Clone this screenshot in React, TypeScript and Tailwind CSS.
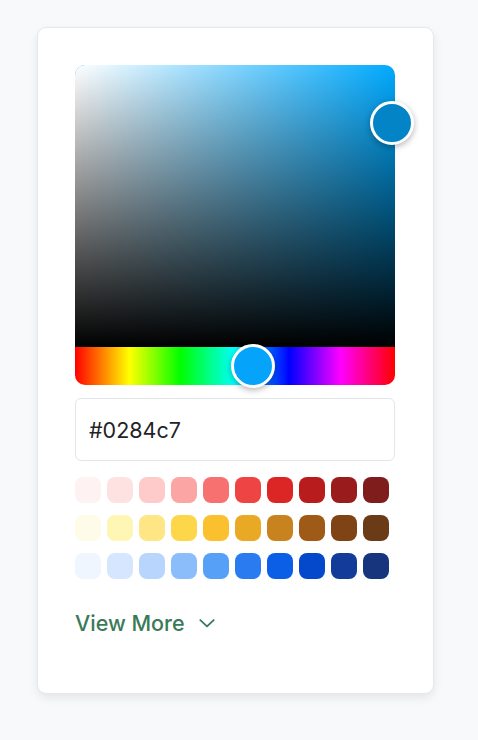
import { useState } from 'react';

const swatches = [
  ['#fef2f2', '#fee2e2', '#fecaca', '#fca5a5', '#f87171', '#ef4444', '#dc2626', '#b91c1c', '#991b1b', '#7f1d1d'],
  ['#fefce8', '#fef6b4', '#fee685', '#fdd649', '#fbc02d', '#eaa925', '#c98220', '#a05a17', '#7e4416', '#6b3a17'],
  ['#eff6ff', '#d6e6fe', '#b7d5fd', '#8bbdfb', '#56a0f7', '#2a7bf0', '#0b5fe6', '#0448cc', '#133c9a', '#17357d'],
];

const App = () => {
  const [hex, setHex] = useState('#0284c7');

  return (
    <div
      className="min-h-screen bg-[#f8f9fb] pl-[37px] pt-[27px]"
      style={{ fontFamily: 'Inter, "Noto Sans", sans-serif' }}
    >
      <div className="w-[397px] h-[667px] bg-white border border-[#e5e7eb] rounded-[9px] shadow-[0_4px_10px_rgba(0,0,0,0.08)] px-[37px] pt-[37px]">
        {/* picker */}
        <div className="relative w-[320px]">
          <div className="relative h-[282px] rounded-t-[10px] bg-[#00aaff] overflow-hidden">
            <div className="absolute inset-0 bg-gradient-to-r from-white to-transparent" />
            <div className="absolute inset-0 bg-gradient-to-b from-transparent to-black" />
          </div>
          <div className="h-[38px] rounded-b-[10px] bg-[linear-gradient(to_right,#ff0000_0%,#ffff00_17%,#00ff00_33%,#00ffff_50%,#0000ff_67%,#ff00ff_83%,#ff0000_100%)]" />
          <div className="absolute left-[295px] top-[36px] w-[44px] h-[44px] rounded-full border-[3px] border-white bg-[#0284c7] shadow-[0_2px_6px_rgba(0,0,0,0.3)]" />
          <div className="absolute left-[156px] top-[279px] w-[44px] h-[44px] rounded-full border-[3px] border-white bg-[#06a3fb] shadow-[0_2px_6px_rgba(0,0,0,0.3)]" />
        </div>

        <input
          value={hex}
          onChange={(e) => setHex(e.target.value)}
          className="mt-[13px] w-[320px] h-[63px] border border-[#e2e5ea] rounded-[6px] px-[13px] text-[21.5px] text-[#1f2328] outline-none"
        />

        <div className="mt-[16px] flex flex-col gap-[12px]">
          {swatches.map((row, i) => (
            <div key={i} className="flex gap-[6px]">
              {row.map((c) => (
                <button
                  key={c}
                  className="w-[26px] h-[26px] rounded-[8px]"
                  style={{ backgroundColor: c }}
                  onClick={() => setHex(c)}
                />
              ))}
            </div>
          ))}
        </div>

        <button className="mt-[28px] flex items-center gap-[12px] text-[21.5px] font-medium text-[#3b7a58]">
          View More
          <svg width="20" height="20" viewBox="0 0 24 24" fill="none" stroke="currentColor" strokeWidth={2.2} strokeLinecap="round" strokeLinejoin="round">
            <path d="M4 8.5l8 7.5 8-7.5" />
          </svg>
        </button>
      </div>
    </div>
  );
};

export default App;
